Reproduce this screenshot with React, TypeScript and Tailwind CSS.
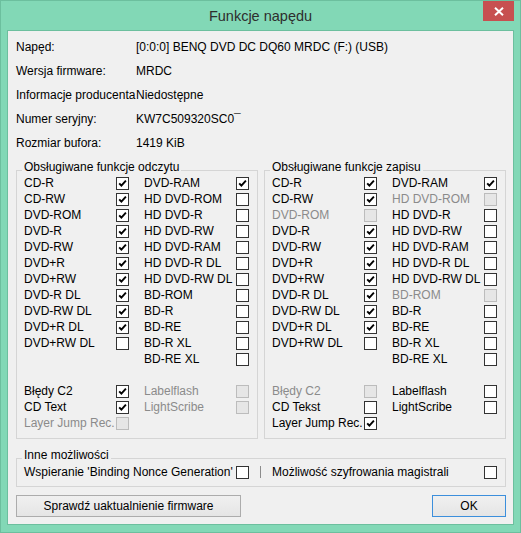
import React from "react";

type St = "on" | "off" | "dis";
type Item = { label: string; st: St } | null;

function Check({ st }: { st: St }) {
  if (st === "dis") {
    return <div className="w-[13px] h-[13px] shrink-0 border border-[#bcbcbc] bg-[#e6e6e6]" />;
  }
  return (
    <div className="w-[13px] h-[13px] shrink-0 border border-[#333333] bg-white flex items-center justify-center">
      {st === "on" && (
        <svg width="11" height="11" viewBox="0 0 11 11">
          <path d="M2.2 5.3 L4.4 7.6 L8.9 2.6" stroke="#000" strokeWidth="1.9" fill="none" />
        </svg>
      )}
    </div>
  );
}

function Cell({ item, first }: { item: Item; first?: boolean }) {
  if (!item) return <div className={`flex ${first ? "" : "ml-[15px]"} w-[105px]`} />;
  return (
    <div className={`flex items-center ${first ? "" : "ml-[15px]"}`}>
      <div className={`w-[92px] whitespace-nowrap ${item.st === "dis" ? "text-[#8b8b8b]" : "text-black"}`}>
        {item.label}
      </div>
      <Check st={item.st} />
    </div>
  );
}

function Legend({ children }: { children: React.ReactNode }) {
  return (
    <div className="-mt-[12px] -ml-[2px] px-[2px] w-fit bg-[#f0f0f0] h-[16px] leading-[16px] whitespace-nowrap">
      {children}
    </div>
  );
}

function Group({ title, rows }: { title: string; rows: [Item, Item][] }) {
  return (
    <div className="w-[242px] border border-[#d5d5d5] pl-[7px] pr-[7px] pb-[7px]">
      <Legend>{title}</Legend>
      <div className="flex flex-col">
        {rows.map((r, i) => (
          <div key={i} className="flex h-[16px] items-center">
            <Cell item={r[0]} first />
            <Cell item={r[1]} />
          </div>
        ))}
      </div>
    </div>
  );
}

const I = (label: string, st: St): Item => ({ label, st });

const readRows: [Item, Item][] = [
  [I("CD-R", "on"), I("DVD-RAM", "on")],
  [I("CD-RW", "on"), I("HD DVD-ROM", "off")],
  [I("DVD-ROM", "on"), I("HD DVD-R", "off")],
  [I("DVD-R", "on"), I("HD DVD-RW", "off")],
  [I("DVD-RW", "on"), I("HD DVD-RAM", "off")],
  [I("DVD+R", "on"), I("HD DVD-R DL", "off")],
  [I("DVD+RW", "on"), I("HD DVD-RW DL", "off")],
  [I("DVD-R DL", "on"), I("BD-ROM", "off")],
  [I("DVD-RW DL", "on"), I("BD-R", "off")],
  [I("DVD+R DL", "on"), I("BD-RE", "off")],
  [I("DVD+RW DL", "off"), I("BD-R XL", "off")],
  [null, I("BD-RE XL", "off")],
  [null, null],
  [I("Błędy C2", "on"), I("Labelflash", "dis")],
  [I("CD Text", "on"), I("LightScribe", "dis")],
  [I("Layer Jump Rec.", "dis"), null],
];

const writeRows: [Item, Item][] = [
  [I("CD-R", "on"), I("DVD-RAM", "on")],
  [I("CD-RW", "on"), I("HD DVD-ROM", "dis")],
  [I("DVD-ROM", "dis"), I("HD DVD-R", "off")],
  [I("DVD-R", "on"), I("HD DVD-RW", "off")],
  [I("DVD-RW", "on"), I("HD DVD-RAM", "off")],
  [I("DVD+R", "on"), I("HD DVD-R DL", "off")],
  [I("DVD+RW", "on"), I("HD DVD-RW DL", "off")],
  [I("DVD-R DL", "on"), I("BD-ROM", "dis")],
  [I("DVD-RW DL", "on"), I("BD-R", "off")],
  [I("DVD+R DL", "on"), I("BD-RE", "off")],
  [I("DVD+RW DL", "off"), I("BD-R XL", "off")],
  [null, I("BD-RE XL", "off")],
  [null, null],
  [I("Błędy C2", "dis"), I("Labelflash", "off")],
  [I("CD Tekst", "off"), I("LightScribe", "off")],
  [I("Layer Jump Rec.", "on"), null],
];

const info: [string, string][] = [
  ["Napęd:", "[0:0:0] BENQ DVD DC DQ60 MRDC (F:) (USB)"],
  ["Wersja firmware:", "MRDC"],
  ["Informacje producenta", "Niedostępne"],
  ["Numer seryjny:", "KW7C509320SC0¯"],
  ["Rozmiar bufora:", "1419 KiB"],
];

export default function App() {
  return (
    <div
      className="w-[521px] h-[533px] bg-[#82d8b6] border border-[#6cbf9e] flex flex-col text-[12px] text-black"
      style={{ fontFamily: '"Liberation Sans", Arial, sans-serif' }}
    >
      <div className="h-[29px] grid grid-cols-[1fr_auto_1fr] shrink-0">
        <div />
        <div className="self-center text-[14.5px] text-[#2e2e2e] leading-[20px] whitespace-nowrap">Funkcje napędu</div>
        <div className="justify-self-end mr-[6px] w-[31px] h-[20px] bg-[#c75050] flex items-center justify-center">
          <svg width="10" height="9" viewBox="0 0 10 9">
            <path d="M1 0.8 L9 8.2 M9 0.8 L1 8.2" stroke="#fff" strokeWidth="2" />
          </svg>
        </div>
      </div>
      <div className="mx-[6px] h-[495px] border border-[#6cbf9e] bg-[#f0f0f0] pl-[8px] pr-[7px] pt-[4px] flex flex-col">
        <div className="flex flex-col">
          {info.map(([k, v]) => (
            <div key={k} className="flex h-[24px] items-center whitespace-nowrap">
              <div className="w-[120px]">{k}</div>
              <div>{v}</div>
            </div>
          ))}
        </div>
        <div className="mt-[15px] flex gap-[6px]">
          <Group title="Obsługiwane funkcje odczytu" rows={readRows} />
          <Group title="Obsługiwane funkcje zapisu" rows={writeRows} />
        </div>
        <div className="mt-[19px] w-[490px] border border-[#d5d5d5] pl-[7px] pr-[7px] pb-[6px]">
          <Legend>Inne możliwości</Legend>
          <div className="flex h-[17px] items-center pt-[1px]">
            <div className="w-[212px] whitespace-nowrap">Wspieranie 'Binding Nonce Generation'</div>
            <Check st="off" />
            <div className="ml-[11px] w-px h-[12px] bg-[#8c8c8c]" />
            <div className="ml-[11px] w-[212px] whitespace-nowrap">Możliwość szyfrowania magistrali</div>
            <Check st="off" />
          </div>
        </div>
        <div className="mt-[8px] flex w-[490px] justify-between">
          <div className="w-[225px] h-[22px] border border-[#acacac] bg-linear-to-b from-[#f0f0f0] to-[#e5e5e5] flex items-center justify-center">
            Sprawdź uaktualnienie firmware
          </div>
          <div className="w-[74px] h-[22px] border border-[#3c8fdc] bg-linear-to-b from-[#f0f0f0] to-[#e5e5e5] flex items-center justify-center">
            OK
          </div>
        </div>
      </div>
    </div>
  );
}
